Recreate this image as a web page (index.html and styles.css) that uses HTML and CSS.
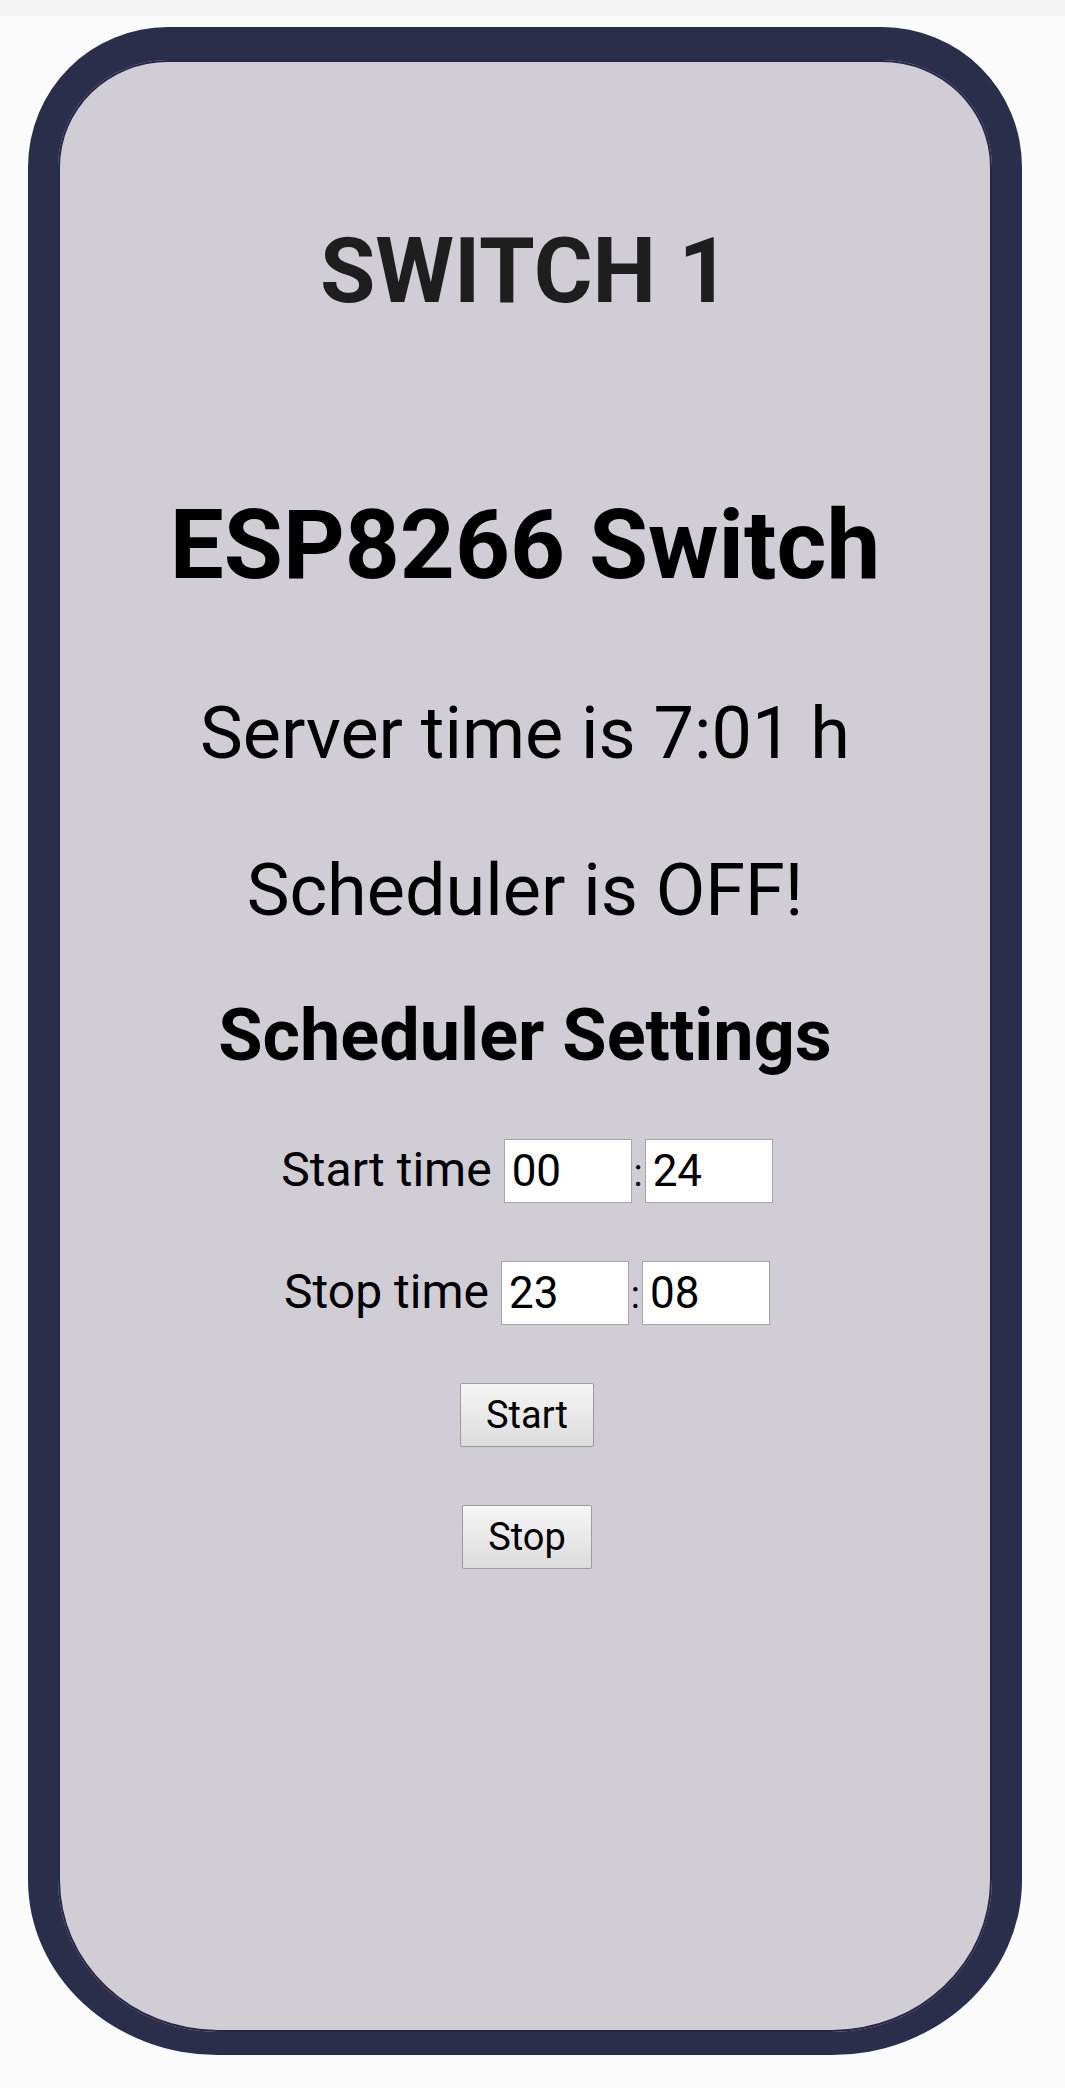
FILE: index.html
```html
<!DOCTYPE html>
<html lang="en">
<head>
<meta charset="utf-8">
<title>ESP8266 Switch</title>
<link rel="stylesheet" href="styles.css">
</head>
<body>
<div class="strip"></div>
<div class="phone">
  <div class="screen">
    <h1 class="title">SWITCH 1</h1>
    <h2 class="app">ESP8266 Switch</h2>
    <p class="status">Server time is 7:01 h</p>
    <p class="status off">Scheduler is OFF!</p>
    <h3 class="settings">Scheduler Settings</h3>
    <form class="form">
      <div class="row row-first">
        <label class="label">Start time</label>
        <input class="field" type="text" value="00">
        <span class="colon">:</span>
        <input class="field" type="text" value="24">
      </div>
      <div class="row">
        <label class="label">Stop time</label>
        <input class="field" type="text" value="23">
        <span class="colon">:</span>
        <input class="field" type="text" value="08">
      </div>
      <button class="btn" type="button">Start</button>
      <button class="btn" type="button">Stop</button>
    </form>
  </div>
</div>
</body>
</html>
```

FILE: styles.css
```css
html, body {
  margin: 0;
  padding: 0;
}
body {
  background: #fbfbfc;
  font-family: Roboto, "Liberation Sans", sans-serif;
  width: 1065px;
  height: 2088px;
  overflow: hidden;
}
.strip {
  height: 16px;
  background: #f3f3f3;
}
.phone {
  box-sizing: border-box;
  margin: 11px 0 0 28px;
  width: 994px;
  height: 2028px;
  border-style: solid;
  border-color: #2a2e4b;
  border-width: 33px 30px 23px 30px;
  border-radius: 140px 140px 190px 190px / 140px 140px 175px 175px;
  background: #d0cdd5;
  box-shadow: inset 0 0 0 2px #2c2448;
}
.screen {
  display: flex;
  flex-direction: column;
  align-items: center;
  padding-top: 167px;
  color: #000;
}
.title {
  margin: 0;
  font-size: 90px;
  line-height: 1;
  font-weight: 700;
  color: #1e1e1e;
}
.app {
  margin: 180px 0 0;
  font-size: 96px;
  line-height: 1;
  font-weight: 700;
}
.status {
  margin: 105px 0 0;
  font-size: 72px;
  line-height: 1;
  font-weight: 400;
}
.status.off {
  margin-top: 85px;
}
.settings {
  margin: 73px 0 0;
  font-size: 72px;
  line-height: 1;
  font-weight: 700;
}
.form {
  display: flex;
  flex-direction: column;
  align-items: center;
  margin: 0;
}
.row {
  display: flex;
  align-items: baseline;
  margin-top: 58px;
  height: 64px;
  padding-left: 4px;
}
.row-first {
  margin-top: 67px;
}
.label {
  font-size: 48px;
  line-height: 1;
  margin-right: 12px;
}
.field {
  box-sizing: border-box;
  width: 128px;
  height: 64px;
  margin: 0;
  padding: 0 7px;
  border: 1px solid #a6a6a6;
  background: #fff;
  font-family: Roboto, "Liberation Sans", sans-serif;
  font-size: 44px;
  color: #000;
  outline: none;
}
.colon {
  width: 13px;
  text-align: center;
  font-size: 38px;
  line-height: 1;
}
.btn {
  box-sizing: border-box;
  height: 64px;
  margin: 58px 0 0 4px;
  padding: 0 25px;
  border: 1px solid #9c9c9c;
  border-radius: 2px;
  background: linear-gradient(#f6f6f6, #dcdcdc);
  font-family: Roboto, "Liberation Sans", sans-serif;
  font-size: 38px;
  color: #000;
}
```
